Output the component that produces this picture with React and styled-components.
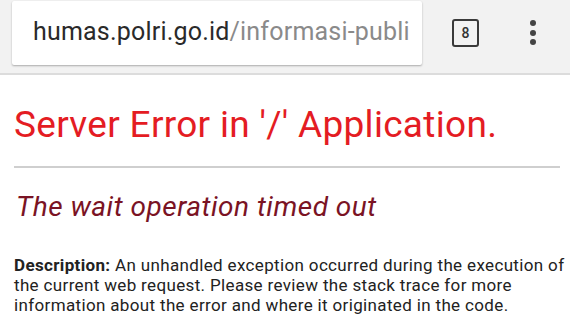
import styled, { createGlobalStyle } from "styled-components";

const GlobalStyle = createGlobalStyle`
  html, body {
    margin: 0;
    padding: 0;
    background: #ffffff;
    font-family: Roboto, "Liberation Sans", Arial, sans-serif;
  }
`;

const Page = styled.div`
  width: 570px;
  height: 320px;
  overflow: hidden;
  background: #ffffff;
`;

const Toolbar = styled.div`
  height: 75px;
  background: #f2f2f2;
  border-bottom: 2px solid #dcdcdc;
  display: flex;
  align-items: flex-start;
  padding: 0 0 0 12px;
  box-sizing: border-box;
`;

const UrlBox = styled.div`
  width: 410px;
  height: 64px;
  margin-top: 1px;
  background: #ffffff;
  box-shadow: 0 1px 2px rgba(0, 0, 0, 0.3);
  border-radius: 2px;
  display: flex;
  align-items: center;
  padding: 0 0 3px 21px;
  box-sizing: border-box;
  white-space: nowrap;
  overflow: hidden;
  font-size: 25px;
  letter-spacing: 0.2px;
`;

const Host = styled.span`
  color: #2a2a2a;
`;

const Path = styled.span`
  color: #8a8a8a;
`;

const TabCount = styled.div`
  width: 27px;
  height: 28px;
  margin: 19px 0 0 30px;
  border: 2.5px solid #3a3a3a;
  border-radius: 3px;
  box-sizing: border-box;
  display: flex;
  align-items: center;
  justify-content: center;
  font-size: 14px;
  font-weight: 500;
  color: #333333;
`;

const MenuDots = styled.div`
  margin: 20px 0 0 51px;
  display: flex;
  flex-direction: column;
  gap: 3.5px;
`;

const Dot = styled.span`
  width: 6px;
  height: 6px;
  border-radius: 50%;
  background: #444444;
`;

const Content = styled.div`
  padding: 0 2px 0 14px;
`;

const Title = styled.h1`
  margin: 29px 0 0;
  font-size: 37px;
  font-weight: 400;
  letter-spacing: 0.3px;
  color: #e41c23;
  line-height: 42px;
`;

const Rule = styled.hr`
  margin: 20px 8px 0 0;
  border: none;
  height: 2px;
  background: #cfcfcf;
`;

const Subtitle = styled.h2`
  margin: 23px 0 0 2px;
  font-size: 28px;
  font-weight: 400;
  font-style: italic;
  letter-spacing: 0.5px;
  color: #7a1324;
  line-height: 32px;
`;

const Description = styled.p`
  margin: 32px 0 0;
  font-size: 17px;
  line-height: 20px;
  letter-spacing: 0.35px;
  white-space: nowrap;
  color: #222222;

  b {
    font-weight: 700;
  }
`;

export default function App() {
  return (
    <Page>
      <GlobalStyle />
      <Toolbar>
        <UrlBox>
          <Host>humas.polri.go.id</Host>
          <Path>/informasi-publi</Path>
        </UrlBox>
        <TabCount>8</TabCount>
        <MenuDots>
          <Dot />
          <Dot />
          <Dot />
        </MenuDots>
      </Toolbar>
      <Content>
        <Title>Server Error in '/' Application.</Title>
        <Rule />
        <Subtitle>The wait operation timed out</Subtitle>
        <Description>
          <b>Description:</b> An unhandled exception occurred during the execution of
          <br />
          the current web request. Please review the stack trace for more
          <br />
          information about the error and where it originated in the code.
        </Description>
      </Content>
    </Page>
  );
}
